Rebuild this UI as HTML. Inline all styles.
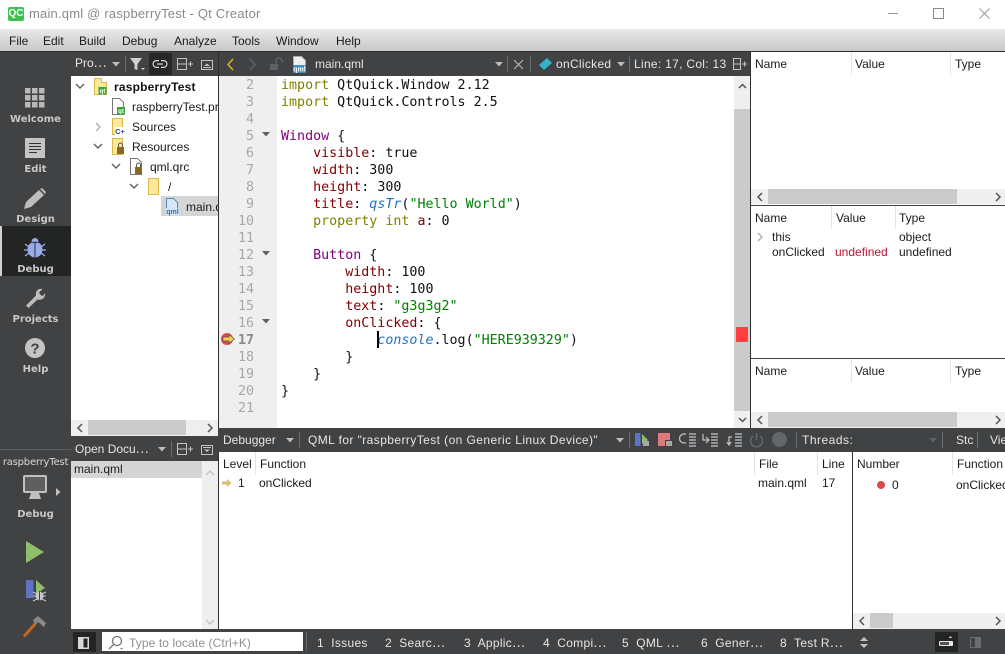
<!DOCTYPE html>
<html><head><meta charset="utf-8"><style>
html,body{margin:0;padding:0;background:#fff}
#r{position:relative;width:1005px;height:654px;overflow:hidden;background:#fff;font:12px/16px "Liberation Sans","Noto Sans CJK KR",sans-serif;color:#1a1a1a}
.b{position:absolute}
.t{position:absolute;white-space:pre;line-height:16px}
.w{color:#e6e6e6}
.s{position:absolute;font:bold 10px/12px "DejaVu Sans",sans-serif;color:#c8c8c8;width:71px;left:0;text-align:center}
.n{position:absolute;left:219px;width:35px;text-align:right;font:13.33px/17px "DejaVu Sans Mono",monospace;color:#a8a8a8}
.c{position:absolute;left:281px;white-space:pre;font:13.33px/17px "DejaVu Sans Mono",monospace;color:#111}
.k{color:#808000}.p{color:#800000}.o{color:#800080}.g{color:#008000}.i{color:#1f74c4;font-style:italic}
svg{position:absolute;overflow:visible}
.sep{position:absolute;width:1px;background:#e4e4e4}
.dsep{position:absolute;width:1px;background:#6a6c6e}
</style></head><body><div id="r">

<!-- title -->
<div class="b" style="left:8px;top:7px;width:16px;height:14px;background:#3fc14f;border-radius:2px;color:#fff;font:bold 10px/14px 'Liberation Sans',sans-serif;text-align:center">QC</div>
<div class="t" style="left:29px;top:6px;font-size:13px;color:#8a8a8a;letter-spacing:.2px">main.qml @ raspberryTest - Qt Creator</div>
<div class="b" style="left:888px;top:13px;width:10px;height:1px;background:#9a9a9a"></div>
<div class="b" style="left:933px;top:8px;width:9px;height:9px;border:1px solid #888"></div>
<svg style="left:979px;top:8px" width="11" height="11"><path d="M.5.5l10 10M10.5.5l-10 10" stroke="#999" fill="none"/></svg>

<!-- menu -->
<div class="b" style="left:0;top:29px;width:1005px;height:22px;background:linear-gradient(#e9e9e9,#c8c8c8)"></div>
<div class="b" style="left:0;top:51px;width:1005px;height:1px;background:#2e2f30"></div>
<div class="t" style="left:9px;top:33px">File</div>
<div class="t" style="left:43px;top:33px">Edit</div>
<div class="t" style="left:79px;top:33px">Build</div>
<div class="t" style="left:122px;top:33px">Debug</div>
<div class="t" style="left:174px;top:33px">Analyze</div>
<div class="t" style="left:232px;top:33px">Tools</div>
<div class="t" style="left:276px;top:33px">Window</div>
<div class="t" style="left:336px;top:33px">Help</div>

<!-- sidebar -->
<div class="b" style="left:0;top:52px;width:71px;height:602px;background:#404244"></div>
<div class="b" style="left:0;top:226px;width:71px;height:50px;background:#232424"></div>
<div class="b" style="left:0;top:226px;width:2px;height:50px;background:#cfcfcf"></div>
<div class="b" style="left:0;top:449px;width:71px;height:1px;background:#5c5e60"></div>

<svg style="left:25px;top:88px" width="20" height="20" fill="#b9b9b9"><rect width="5.5" height="5.5"/><rect x="7" width="5.5" height="5.5"/><rect x="14" width="5.5" height="5.5"/><rect y="7" width="5.5" height="5.5"/><rect x="7" y="7" width="5.5" height="5.5"/><rect x="14" y="7" width="5.5" height="5.5"/><rect y="14" width="5.5" height="5.5"/><rect x="7" y="14" width="5.5" height="5.5"/><rect x="14" y="14" width="5.5" height="5.5"/></svg>
<div class="s" style="top:114px">Welcome</div>
<svg style="left:25px;top:138px" width="20" height="20"><rect width="20" height="20" fill="#c4c4c4"/><path d="M4 5.5h12M4 8.5h12M4 11.5h12M4 14.5h8" stroke="#333" stroke-width="1"/></svg>
<div class="s" style="top:164px">Edit</div>
<svg style="left:24px;top:188px" width="22" height="22"><path d="M0 21l2-7L15 2l5 5L7 19z" fill="#bdbdbd"/><path d="M16 1l2-1 4 4-1 2z" fill="#bdbdbd"/></svg>
<div class="s" style="top:214px">Design</div>
<svg style="left:24px;top:237px" width="22" height="22"><ellipse cx="11" cy="12.500" rx="7.500" ry="8" fill="#9aabea"/><path d="M7.500 5a3.500 4 0 0 1 7 0z" fill="#9aabea"/><path d="M11 5.500v15M7 5.300h8" stroke="#232424" stroke-width=".9"/><path d="M1 7l4 3M0 13h4M1 19l4-3M21 7l-4 3M22 13h-4M21 19l-4-3" stroke="#9aabea" stroke-width="1.300"/></svg>
<div class="s" style="top:264px">Debug</div>
<svg style="left:25px;top:288px" width="20" height="20"><path d="M1 17.500L11 7.500C10 3.500 13 0 17.500 1L14 4.500l1.500 2.500 2.500 1L20 5c1 4-3 8-7.500 6.500L3.500 20z" fill="#bdbdbd"/></svg>
<div class="s" style="top:314px">Projects</div>
<svg style="left:25px;top:338px" width="20" height="20"><circle cx="10" cy="10" r="10" fill="#c4c4c4"/><text x="10" y="15.500" text-anchor="middle" font-family="Liberation Sans" font-weight="bold" font-size="15" fill="#404244">?</text></svg>
<div class="s" style="top:364px">Help</div>
<div class="t" style="left:0;width:71px;text-align:center;top:455px;font:10px/16px 'DejaVu Sans',sans-serif;color:#d8d8d8;letter-spacing:-.2px">raspberryTest</div>
<svg style="left:23px;top:475px" width="24" height="24"><rect x="1" y="1" width="22" height="16" rx="1" fill="#5e5f60" stroke="#c0c0c0" stroke-width="2"/><path d="M8 18h8l2 6H6z" fill="#c0c0c0"/></svg>
<svg style="left:56px;top:488px" width="5" height="8"><path d="M0 0l4.500 4L0 8z" fill="#c0c0c0"/></svg>
<div class="s" style="top:509px">Debug</div>
<svg style="left:26px;top:541px" width="18" height="22"><path d="M0 0l18 11L0 22z" fill="#8fbe69"/></svg>
<svg style="left:25px;top:579px" width="21" height="24"><rect x="1" y="1" width="7.500" height="18" fill="#5f72c5"/><path d="M11 1l9 8-9 6z" fill="#8fbe69"/><ellipse cx="14.500" cy="17" rx="4" ry="4.500" fill="#c9c9c9"/><path d="M8 13l4 2M8 17h4M8 22l4-2M21 13l-4 2M21 17h-4M21 22l-4-2" stroke="#c9c9c9"/><path d="M14.500 12v10" stroke="#404244"/></svg>
<svg style="left:23px;top:615px" width="24" height="24"><path d="M1 21.500L12 9" stroke="#c8661c" stroke-width="3"/><path d="M10 5l5-4 8 7-2 4-6-5-3 3z" fill="#8a8a8a"/></svg>

<!-- project toolbar -->
<div class="b" style="left:71px;top:52px;width:934px;height:24px;background:#404244"></div>
<div class="t w" style="left:75px;top:55px">Pro⋯</div>
<svg style="left:112px;top:62px" width="9" height="5"><path d="M0 0h8L4 4.500z" fill="#bdbdbd"/></svg>
<div class="dsep" style="left:125px;top:56px;height:16px"></div>
<svg style="left:130px;top:58px" width="15" height="13"><path d="M0 0h12L7.500 6v6l-3-1V6z" fill="#d0d0d0"/><path d="M11 10h4L13 12z" fill="#d0d0d0"/></svg>
<div class="b" style="left:149px;top:53px;width:23px;height:22px;background:#262727"></div>
<svg style="left:153px;top:60px" width="14" height="8" fill="none" stroke="#d6d6d6" stroke-width="1.200"><path d="M6 .6H3.500a3.400 3.400 0 0 0 0 6.800H6M8 .6h2.500a3.400 3.400 0 0 1 0 6.800H8M4 4h6"/></svg>
<svg style="left:177px;top:58px" width="16" height="13" fill="none" stroke="#c4c4c4"><path d="M.5.500h9v11h-9zM.5 6h9M11 6h5M13.500 3.500v5"/></svg>
<svg style="left:201px;top:60px" width="12" height="10"><rect x=".5" y=".5" width="11" height="9" fill="none" stroke="#c4c4c4"/><path d="M3 6l3-2.500L9 6z" fill="#c4c4c4"/><path d="M2 7.500h8" stroke="#c4c4c4"/></svg>

<!-- project tree -->
<div class="b" style="left:71px;top:76px;width:147px;height:344px;background:#fff"></div>
<svg style="left:75px;top:83px" width="10" height="7" fill="none" stroke="#606060" stroke-width="1.400"><path d="M1 1l4 4 4-4"/></svg>
<svg style="left:94px;top:78px" width="13" height="17"><path d="M.5.500h7v4h5v12H.5z" fill="#fbe99a" stroke="#dab94a"/><rect x="4.500" y="9" width="8" height="7.500" fill="#3aa63a"/><text x="8.500" y="15" text-anchor="middle" font-size="6" font-family="Liberation Sans" font-weight="bold" fill="#fff">qt</text></svg>
<div class="t" style="left:114px;top:79px;font-weight:bold;color:#111;letter-spacing:.2px">raspberryTest</div>
<svg style="left:112px;top:98px" width="14" height="17"><path d="M.5.500h7l4 4v12H.5z" fill="#fff" stroke="#777"/><rect x="5" y="9" width="8" height="7.500" fill="#3aa63a"/><text x="9" y="15" text-anchor="middle" font-size="6" font-family="Liberation Sans" font-weight="bold" fill="#fff">qt</text></svg>
<div class="t" style="left:132px;top:99px;width:86px;overflow:hidden">raspberryTest.pro</div>
<svg style="left:95px;top:122px" width="7" height="10" fill="none" stroke="#b0b0b0" stroke-width="1.400"><path d="M1 1l4 4-4 4"/></svg>
<svg style="left:112px;top:118px" width="14" height="17"><path d="M.5.500h10v16H.5z" fill="#fbe99a" stroke="#dab94a"/><rect x="3" y="9" width="10" height="8" fill="#fff"/><text x="8" y="16" text-anchor="middle" font-size="7.500" font-family="Liberation Sans" font-weight="bold" fill="#24408a">C+</text></svg>
<div class="t" style="left:132px;top:119px">Sources</div>
<svg style="left:93px;top:143px" width="10" height="7" fill="none" stroke="#606060" stroke-width="1.400"><path d="M1 1l4 4 4-4"/></svg>
<svg style="left:112px;top:138px" width="14" height="17"><path d="M.5.500h10v16H.5z" fill="#fbe99a" stroke="#dab94a"/><rect x="5" y="9" width="7" height="7" fill="#8a6a1a"/><path d="M6.500 9V7a2 2 0 0 1 4 0v2" fill="none" stroke="#555"/></svg>
<div class="t" style="left:132px;top:139px">Resources</div>
<svg style="left:111px;top:163px" width="10" height="7" fill="none" stroke="#606060" stroke-width="1.400"><path d="M1 1l4 4 4-4"/></svg>
<svg style="left:130px;top:158px" width="14" height="17"><path d="M.5.500h7l4 4v12H.5z" fill="#fff" stroke="#777"/><rect x="5" y="9" width="7" height="7" fill="#8a6a1a"/><path d="M6.500 9V7a2 2 0 0 1 4 0v2" fill="none" stroke="#555"/></svg>
<div class="t" style="left:150px;top:159px">qml.qrc</div>
<svg style="left:129px;top:183px" width="10" height="7" fill="none" stroke="#606060" stroke-width="1.400"><path d="M1 1l4 4 4-4"/></svg>
<svg style="left:148px;top:178px" width="13" height="17"><path d="M.5.500h10v16H.5z" fill="#fbe99a" stroke="#dab94a"/></svg>
<div class="t" style="left:168px;top:179px">/</div>
<div class="b" style="left:161px;top:196px;width:57px;height:20px;background:#d5d5d5"></div>
<svg style="left:166px;top:198px" width="14" height="17"><path d="M.5.500h7l4 4v12H.5z" fill="#d6e6f6" stroke="#5a88b8"/><rect y="10" width="13" height="7" fill="#d6e6f6"/><text x="6.500" y="16" text-anchor="middle" font-size="7" font-family="Liberation Sans" font-weight="bold" fill="#2d72b8">qml</text></svg>
<div class="t" style="left:186px;top:199px;width:32px;overflow:hidden">main.qml</div>
<!-- project hscroll -->
<div class="b" style="left:71px;top:420px;width:147px;height:16px;background:#efefef"></div>
<div class="b" style="left:88px;top:420px;width:98px;height:15px;background:#cbcbcb"></div>
<svg style="left:76px;top:423px" width="7" height="10" fill="none" stroke="#555" stroke-width="1.500"><path d="M6 1L2 5l4 4"/></svg>
<svg style="left:207px;top:423px" width="7" height="10" fill="none" stroke="#555" stroke-width="1.500"><path d="M1 1l4 4-4 4"/></svg>

<!-- open docs -->
<div class="b" style="left:71px;top:436px;width:147px;height:25px;background:#404244"></div>
<div class="t w" style="left:75px;top:441px">Open Docu⋯</div>
<svg style="left:158px;top:447px" width="9" height="5"><path d="M0 0h8L4 4.500z" fill="#bdbdbd"/></svg>
<div class="dsep" style="left:171px;top:441px;height:16px"></div>
<svg style="left:177px;top:443px" width="16" height="13" fill="none" stroke="#c4c4c4"><path d="M.5.500h9v11h-9zM.5 6h9M11 6h5M13.500 3.500v5"/></svg>
<svg style="left:201px;top:445px" width="12" height="10"><rect x=".5" y=".5" width="11" height="9" fill="none" stroke="#c4c4c4"/><path d="M2 2.500h8" stroke="#c4c4c4"/><path d="M3 4.500l3 2.500 3-2.500z" fill="#c4c4c4"/></svg>
<div class="b" style="left:71px;top:461px;width:147px;height:168px;background:#fff"></div>
<div class="b" style="left:71px;top:461px;width:131px;height:17px;background:#d5d5d5"></div>
<div class="t" style="left:74px;top:461px">main.qml</div>
<div class="b" style="left:202px;top:461px;width:16px;height:168px;background:#efefef"></div>
<svg style="left:205px;top:469px" width="10" height="7" fill="none" stroke="#c4c4c4" stroke-width="1.500"><path d="M1 6l4-4 4 4"/></svg>
<svg style="left:205px;top:619px" width="10" height="7" fill="none" stroke="#c4c4c4" stroke-width="1.500"><path d="M1 1l4 4 4-4"/></svg>

<!-- editor toolbar -->
<div class="b" style="left:218px;top:52px;width:1px;height:377px;background:#2e2f30"></div>
<svg style="left:227px;top:58px" width="7" height="13" fill="none" stroke="#e0b020" stroke-width="1.500"><path d="M6 1L1 6.500 6 12"/></svg>
<svg style="left:249px;top:58px" width="7" height="13" fill="none" stroke="#5f6163" stroke-width="1.500"><path d="M1 1l5 5.500L1 12"/></svg>
<svg style="left:270px;top:57px" width="13" height="14"><rect y="7" width="8" height="6" fill="#5f6163"/><path d="M6 7V4a3 3 0 0 1 6 0v1" fill="none" stroke="#5f6163" stroke-width="1.500"/></svg>
<svg style="left:293px;top:56px" width="14" height="17"><path d="M.5.500h8l4 4v12H.5z" fill="#eee" stroke="#aaa"/><rect y="9" width="13" height="8" fill="#3d8fc4"/><text x="6.500" y="15.500" text-anchor="middle" font-size="7" font-family="Liberation Sans" font-weight="bold" fill="#fff">qml</text></svg>
<div class="t w" style="left:315px;top:56px">main.qml</div>
<svg style="left:495px;top:62px" width="9" height="5"><path d="M0 0h8L4 4.500z" fill="#bdbdbd"/></svg>
<div class="dsep" style="left:507px;top:56px;height:16px"></div>
<svg style="left:513px;top:59px" width="11" height="11" fill="none" stroke="#b8b8b8" stroke-width="1.100"><path d="M1 1l9 9M10 1l-9 9"/></svg>
<div class="dsep" style="left:530px;top:56px;height:16px"></div>
<svg style="left:538px;top:58px" width="14" height="13"><path d="M1 7l8-7 5 5-8 7z" fill="#34b4cc"/></svg>
<div class="t w" style="left:556px;top:56px;letter-spacing:.3px">onClicked</div>
<svg style="left:617px;top:62px" width="9" height="5"><path d="M0 0h8L4 4.500z" fill="#bdbdbd"/></svg>
<div class="dsep" style="left:629px;top:56px;height:16px"></div>
<div class="t w" style="left:634px;top:56px;letter-spacing:.3px">Line: 17, Col: 13</div>
<svg style="left:733px;top:58px" width="16" height="13" fill="none" stroke="#c4c4c4"><path d="M.5.500h7v11h-7zM.5 6h7M9 6h5M11.500 3.500v5"/></svg>

<!-- gutter -->
<div class="b" style="left:219px;top:76px;width:58px;height:352px;background:#efefef"></div>
<div class="n" style="top:77px">2</div><div class="n" style="top:94px">3</div><div class="n" style="top:111px">4</div><div class="n" style="top:128px">5</div><div class="n" style="top:145px">6</div><div class="n" style="top:162px">7</div><div class="n" style="top:179px">8</div><div class="n" style="top:196px">9</div><div class="n" style="top:213px">10</div><div class="n" style="top:230px">11</div><div class="n" style="top:247px">12</div><div class="n" style="top:264px">13</div><div class="n" style="top:281px">14</div><div class="n" style="top:298px">15</div><div class="n" style="top:315px">16</div><div class="n" style="top:332px;font-weight:bold;color:#8a8a8a">17</div><div class="n" style="top:349px">18</div><div class="n" style="top:366px">19</div><div class="n" style="top:383px">20</div><div class="n" style="top:400px">21</div>
<svg style="left:262px;top:132px" width="9" height="5"><path d="M0 0h8L4 4.500z" fill="#606060"/></svg>
<svg style="left:262px;top:251px" width="9" height="5"><path d="M0 0h8L4 4.500z" fill="#606060"/></svg>
<svg style="left:262px;top:319px" width="9" height="5"><path d="M0 0h8L4 4.500z" fill="#606060"/></svg>
<svg style="left:221px;top:332px" width="15" height="14"><circle cx="6" cy="7" r="6" fill="#e04848"/><path d="M2 5h6V2.500L13.500 7 8 11.500V9H2z" fill="#f0d050" stroke="#555" stroke-width=".7"/></svg>

<!-- code -->
<div class="c" style="top:77px"><span class="k">import</span> QtQuick.Window 2.12</div>
<div class="c" style="top:94px"><span class="k">import</span> QtQuick.Controls 2.5</div>
<div class="c" style="top:128px"><span class="o">Window</span> {</div>
<div class="c" style="top:145px">    <span class="p">visible</span>: true</div>
<div class="c" style="top:162px">    <span class="p">width</span>: 300</div>
<div class="c" style="top:179px">    <span class="p">height</span>: 300</div>
<div class="c" style="top:196px">    <span class="p">title</span>: <span class="i">qsTr</span>(<span class="g">"Hello World"</span>)</div>
<div class="c" style="top:213px">    <span class="k">property int</span> <span class="p">a</span>: 0</div>
<div class="c" style="top:247px">    <span class="o">Button</span> {</div>
<div class="c" style="top:264px">        <span class="p">width</span>: 100</div>
<div class="c" style="top:281px">        <span class="p">height</span>: 100</div>
<div class="c" style="top:298px">        <span class="p">text</span>: <span class="g">"g3g3g2"</span></div>
<div class="c" style="top:315px">        <span class="p">onClicked</span>: {</div>
<div class="c" style="top:332px">            <span class="i">console</span>.log(<span class="g">"HERE939329"</span>)</div>
<div class="c" style="top:349px">        }</div>
<div class="c" style="top:366px">    }</div>
<div class="c" style="top:383px">}</div>
<div class="b" style="left:377px;top:331px;width:2px;height:17px;background:#000"></div>

<!-- editor vscroll -->
<div class="b" style="left:734px;top:76px;width:16px;height:352px;background:#efefef"></div>
<div class="b" style="left:734px;top:109px;width:16px;height:302px;background:#cbcbcb"></div>
<div class="b" style="left:736px;top:327px;width:12px;height:15px;background:#ff4040"></div>
<svg style="left:738px;top:83px" width="9" height="6" fill="none" stroke="#555" stroke-width="1.500"><path d="M1 5l3.500-3.500L8 5"/></svg>
<svg style="left:738px;top:417px" width="9" height="6" fill="none" stroke="#555" stroke-width="1.500"><path d="M1 1l3.500 3.500L8 1"/></svg>

<!-- right panels -->
<div class="b" style="left:750px;top:52px;width:255px;height:376px;background:#fff"></div>
<div class="b" style="left:750px;top:52px;width:1px;height:376px;background:#2e2f30"></div>
<div class="t" style="left:755px;top:56px">Name</div><div class="t" style="left:855px;top:56px">Value</div><div class="t" style="left:955px;top:56px">Type</div>
<div class="sep" style="left:851px;top:52px;height:23px"></div><div class="sep" style="left:950px;top:52px;height:23px"></div>
<div class="b" style="left:751px;top:189px;width:254px;height:15px;background:#efefef"></div>
<div class="b" style="left:768px;top:189px;width:189px;height:15px;background:#cbcbcb"></div>
<svg style="left:756px;top:192px" width="7" height="10" fill="none" stroke="#555" stroke-width="1.500"><path d="M6 1L2 5l4 4"/></svg>
<svg style="left:995px;top:192px" width="7" height="10" fill="none" stroke="#555" stroke-width="1.500"><path d="M1 1l4 4-4 4"/></svg>
<div class="b" style="left:751px;top:205px;width:254px;height:1px;background:#404244"></div>
<div class="t" style="left:755px;top:210px">Name</div><div class="t" style="left:836px;top:210px">Value</div><div class="t" style="left:899px;top:210px">Type</div>
<div class="sep" style="left:831px;top:206px;height:23px"></div><div class="sep" style="left:895px;top:206px;height:23px"></div>
<svg style="left:757px;top:232px" width="7" height="10" fill="none" stroke="#b0b0b0" stroke-width="1.500"><path d="M1 1l4 4-4 4"/></svg>
<div class="t" style="left:772px;top:229px">this</div><div class="t" style="left:899px;top:229px">object</div>
<div class="t" style="left:772px;top:244px">onClicked</div><div class="t" style="left:835px;top:244px;color:#c01030">undefined</div><div class="t" style="left:899px;top:244px">undefined</div>
<div class="b" style="left:751px;top:358px;width:254px;height:1px;background:#404244"></div>
<div class="t" style="left:755px;top:363px">Name</div><div class="t" style="left:855px;top:363px">Value</div><div class="t" style="left:955px;top:363px">Type</div>
<div class="sep" style="left:851px;top:359px;height:23px"></div><div class="sep" style="left:950px;top:359px;height:23px"></div>
<div class="b" style="left:751px;top:412px;width:254px;height:16px;background:#efefef"></div>
<div class="b" style="left:768px;top:412px;width:189px;height:15px;background:#cbcbcb"></div>
<svg style="left:756px;top:415px" width="7" height="10" fill="none" stroke="#555" stroke-width="1.500"><path d="M6 1L2 5l4 4"/></svg>
<svg style="left:995px;top:415px" width="7" height="10" fill="none" stroke="#555" stroke-width="1.500"><path d="M1 1l4 4-4 4"/></svg>

<!-- debugger toolbar -->
<div class="b" style="left:218px;top:428px;width:787px;height:24px;background:#404244"></div>
<div class="t w" style="left:223px;top:432px">Debugger</div>
<svg style="left:286px;top:438px" width="9" height="5"><path d="M0 0h8L4 4.500z" fill="#bdbdbd"/></svg>
<div class="dsep" style="left:299px;top:432px;height:16px"></div>
<div class="t w" style="left:308px;top:432px;letter-spacing:.42px">QML for "raspberryTest (on Generic Linux Device)"</div>
<svg style="left:616px;top:438px" width="9" height="5"><path d="M0 0h8L4 4.500z" fill="#bdbdbd"/></svg>
<div class="dsep" style="left:629px;top:432px;height:16px"></div>
<svg style="left:635px;top:433px" width="15" height="14"><rect width="5.500" height="13" fill="#5f72c5"/><path d="M7 1l6 6-6 4z" fill="#8fbe69"/><rect x="8" y="8" width="6" height="5" fill="#a8a8a8"/></svg>
<svg style="left:658px;top:433px" width="15" height="14"><path d="M0 0h12v7H7v6H0z" fill="#e07a7a"/><rect x="8" y="8" width="6" height="5" fill="#a8a8a8"/></svg>
<svg style="left:680px;top:433px" width="16" height="14" fill="none" stroke="#c4c4c4" stroke-width="1.200"><path d="M9 1h7M9 4h7M9 7h7M9 10h7M9 13h7M6 1H4a4 4 0 0 0 0 9h2"/></svg>
<svg style="left:702px;top:433px" width="16" height="14" fill="none" stroke="#c4c4c4" stroke-width="1.200"><path d="M9 1h7M9 4h7M9 7h7M9 10h7M9 13h7M1 1v6h5M4 4l3 3-3 3"/></svg>
<svg style="left:726px;top:433px" width="16" height="14" fill="none" stroke="#c4c4c4" stroke-width="1.200"><path d="M9 1h7M9 4h7M9 7h7M9 10h7M9 13h7M6 4H3v7M1 9l2 3 2-3"/></svg>
<svg style="left:749px;top:433px" width="15" height="15" fill="none" stroke="#646668" stroke-width="1.500"><path d="M4 3a6 6 0 1 0 7 0M7.500 0v7"/></svg>
<div class="b" style="left:772px;top:432px;width:15px;height:15px;border-radius:50%;background:#646668"></div>
<div class="dsep" style="left:796px;top:432px;height:16px"></div>
<div class="t w" style="left:802px;top:432px;letter-spacing:.5px">Threads:</div>
<svg style="left:929px;top:438px" width="9" height="5"><path d="M0 0h8L4 4.500z" fill="#5f6163"/></svg>
<div class="dsep" style="left:942px;top:432px;height:16px"></div>
<div class="t w" style="left:956px;top:432px">Stc</div>
<div class="dsep" style="left:977px;top:432px;height:16px"></div>
<div class="t w" style="left:990px;top:432px">Vie</div>

<!-- stack -->
<div class="b" style="left:218px;top:452px;width:1px;height:177px;background:#2e2f30"></div>
<div class="t" style="left:223px;top:456px">Level</div><div class="t" style="left:260px;top:456px">Function</div><div class="t" style="left:759px;top:456px">File</div><div class="t" style="left:822px;top:456px">Line</div>
<div class="sep" style="left:255px;top:452px;height:23px"></div><div class="sep" style="left:754px;top:452px;height:23px"></div><div class="sep" style="left:817px;top:452px;height:23px"></div>
<svg style="left:222px;top:479px" width="10" height="8"><path d="M0 2.500h5V0l4.500 4L5 8V5.500H0z" fill="#d8c070"/></svg>
<div class="t" style="left:238px;top:475px">1</div>
<div class="t" style="left:259px;top:475px">onClicked</div>
<div class="t" style="left:758px;top:475px">main.qml</div>
<div class="t" style="left:822px;top:475px">17</div>
<div class="b" style="left:852px;top:452px;width:1px;height:177px;background:#2e2f30"></div>
<div class="t" style="left:857px;top:456px">Number</div><div class="t" style="left:957px;top:456px">Function</div>
<div class="sep" style="left:952px;top:452px;height:23px"></div>
<div class="b" style="left:877px;top:481px;width:8px;height:8px;border-radius:50%;background:#e04848"></div>
<div class="t" style="left:892px;top:477px">0</div>
<div class="t" style="left:956px;top:477px">onClicked</div>
<div class="b" style="left:853px;top:613px;width:152px;height:16px;background:#efefef"></div>
<div class="b" style="left:870px;top:613px;width:23px;height:15px;background:#cbcbcb"></div>
<svg style="left:858px;top:616px" width="7" height="10" fill="none" stroke="#555" stroke-width="1.500"><path d="M6 1L2 5l4 4"/></svg>
<svg style="left:995px;top:616px" width="7" height="10" fill="none" stroke="#555" stroke-width="1.500"><path d="M1 1l4 4-4 4"/></svg>

<!-- status bar -->
<div class="b" style="left:71px;top:629px;width:934px;height:25px;background:#404244"></div>
<div class="b" style="left:73px;top:632px;width:23px;height:20px;background:#232424"></div>
<svg style="left:78px;top:637px" width="11" height="12"><rect width="11" height="12" fill="#d8d8d8"/><rect x="5.500" y="1.500" width="4" height="9" fill="#232424"/></svg>
<div class="b" style="left:102px;top:632px;width:201px;height:19px;background:#fff"></div>
<svg style="left:108px;top:635px" width="16" height="15" fill="none" stroke="#777" stroke-width="1.300"><circle cx="9" cy="6" r="4.500"/><path d="M5.500 9.500L1 14"/><path d="M12 13h3l-1.500 1.500z" fill="#777" stroke="none"/></svg>
<div class="t" style="left:129px;top:635px;color:#8f8f8f;letter-spacing:.1px">Type to locate (Ctrl+K)</div>
<div class="dsep" style="left:306px;top:632px;height:19px"></div>
<div class="t w" style="left:317px;top:635px;letter-spacing:.3px">1  Issues</div>
<div class="t w" style="left:385px;top:635px;letter-spacing:.3px">2  Searc⋯</div>
<div class="t w" style="left:464px;top:635px;letter-spacing:.3px">3  Applic⋯</div>
<div class="t w" style="left:543px;top:635px;letter-spacing:.3px">4  Compi⋯</div>
<div class="t w" style="left:622px;top:635px;letter-spacing:.3px">5  QML ⋯</div>
<div class="t w" style="left:701px;top:635px;letter-spacing:.3px">6  Gener⋯</div>
<div class="t w" style="left:780px;top:635px;letter-spacing:.3px">8  Test R⋯</div>
<svg style="left:860px;top:637px" width="9" height="11"><path d="M0 4l4-4 4 4zM0 7h8l-4 4z" fill="#c4c4c4"/></svg>
<div class="b" style="left:935px;top:632px;width:23px;height:20px;background:#232424"></div>
<svg style="left:939px;top:635px" width="15" height="13"><rect y="6" width="14" height="5" rx="1" fill="#e6e6e6"/><rect x="1" y="7" width="9" height="3" fill="#555"/><path d="M9.500 3l2-2 2 2z" fill="#c4c4c4"/></svg>
<svg style="left:970px;top:637px" width="11" height="11"><rect x=".5" y=".5" width="10" height="10" fill="#404244" stroke="#6a6c6e"/><rect x="5" y="0" width="6" height="11" fill="#6a6c6e"/></svg>
</div></body></html>
